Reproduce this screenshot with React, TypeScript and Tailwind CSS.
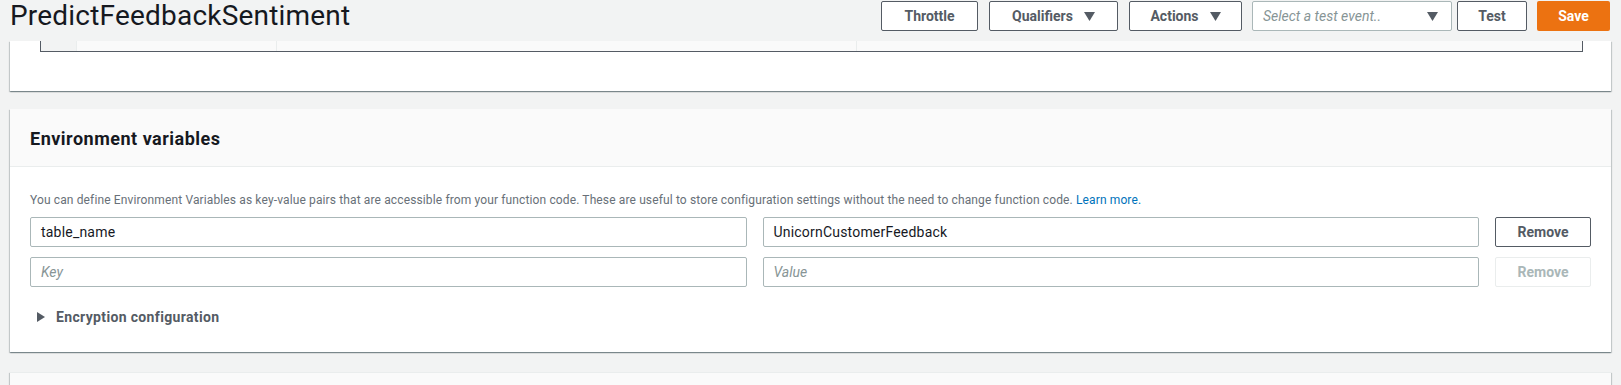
import React from "react";

const Tri = ({ className = "" }: { className?: string }) => (
  <svg width="11" height="9" viewBox="0 0 11 9" className={className}>
    <polygon points="0,0 11,0 5.5,9" fill="currentColor" />
  </svg>
);

const SmallTri = () => (
  <svg width="8" height="10" viewBox="0 0 8 10">
    <polygon points="0,0 8,5 0,10" fill="#545b64" />
  </svg>
);

const cardShadow =
  "shadow-[0_1px_1px_0_rgba(0,28,36,0.3),1px_1px_1px_0_rgba(0,28,36,0.15),-1px_1px_1px_0_rgba(0,28,36,0.15)]";

export default function App() {
  return (
    <div
      className="w-[1621px] h-[385px] overflow-hidden bg-[#f2f3f3] text-[#16191f]"
      style={{ fontFamily: "Roboto, 'Noto Sans', 'Liberation Sans', sans-serif" }}
    >
      {/* Header */}
      <div className="h-[41px] flex items-start justify-between pl-[10px] pr-[11px] pt-[1px]">
        <div className="text-[28px] leading-[30px] text-[#16191f] tracking-[0.2px]">PredictFeedbackSentiment</div>
        <div className="flex items-center">
          <button className="h-[30px] w-[97px] border border-[#545b64] rounded-[2px] bg-white text-[14px] font-bold text-[#545b64]">
            Throttle
          </button>
          <button className="ml-[11px] h-[30px] w-[129px] border border-[#545b64] rounded-[2px] bg-white text-[14px] font-bold text-[#545b64] flex items-center justify-center gap-[11px]">
            <span>Qualifiers</span>
            <Tri />
          </button>
          <button className="ml-[11px] h-[30px] w-[113px] border border-[#545b64] rounded-[2px] bg-white text-[14px] font-bold text-[#545b64] flex items-center justify-center gap-[11px]">
            <span>Actions</span>
            <Tri />
          </button>
          <div className="ml-[10px] h-[30px] w-[200px] border border-[#aab7b8] rounded-[2px] bg-white flex items-center justify-between pl-[10px] pr-[13px] text-[#545b64]">
            <span className="italic text-[14px] text-[#879596]">Select a test event..</span>
            <Tri />
          </div>
          <button className="ml-[5px] h-[30px] w-[70px] border border-[#545b64] rounded-[2px] bg-white text-[14px] font-bold text-[#545b64]">
            Test
          </button>
          <button className="ml-[10px] h-[30px] w-[73px] rounded-[2px] bg-[#ec7211] text-[14px] font-bold text-white">
            Save
          </button>
        </div>
      </div>

      {/* Previous card (scrolled) */}
      <div className={`mx-[10px] h-[50px] bg-white ${cardShadow} pl-[30px] pr-[28px]`}>
        <div className="h-[11px] bg-[#fafafa] border-x border-b border-[#545b64] flex">
          <div className="w-[36px] bg-[#f2f3f3] border-r border-[#eaeded]" />
          <div className="w-[200px] border-r border-[#eaeded]" />
          <div className="w-[580px] border-r border-[#eaeded]" />
          <div className="flex-1" />
        </div>
      </div>

      {/* Environment variables card */}
      <div className={`mx-[10px] mt-[18px] bg-white ${cardShadow}`}>
        <div className="h-[58px] bg-[#fafafa] border-b border-[#eaeded] px-[20px] flex items-center pt-[2px]">
          <h2 className="text-[18px] font-bold text-[#16191f] tracking-[0.5px]">Environment variables</h2>
        </div>
        <div className="px-[20px] pt-[25px] pb-[25px]">
          <p className="text-[12px] leading-[16px] text-[#687078] tracking-[0.13px]">
            You can define Environment Variables as key-value pairs that are accessible from your function code. These are useful to store configuration settings without the need to change function code.{" "}
            <span className="text-[#0073bb]">Learn more.</span>
          </p>
          <div className="mt-[9px] grid grid-cols-[1fr_1fr_96px] gap-x-[16px] gap-y-[10px]">
            <div className="h-[30px] border border-[#aab7b8] rounded-[2px] flex items-center px-[10px] text-[14px] text-[#16191f] tracking-[0.2px]">
              table_name
            </div>
            <div className="h-[30px] border border-[#aab7b8] rounded-[2px] flex items-center px-[10px] text-[14px] text-[#16191f] tracking-[0.2px]">
              UnicornCustomerFeedback
            </div>
            <button className="h-[30px] border border-[#545b64] rounded-[2px] bg-white text-[14px] font-bold text-[#545b64]">
              Remove
            </button>
            <div className="h-[30px] border border-[#aab7b8] rounded-[2px] flex items-center px-[10px] text-[14px] italic text-[#879596]">
              Key
            </div>
            <div className="h-[30px] border border-[#aab7b8] rounded-[2px] flex items-center px-[10px] text-[14px] italic text-[#879596]">
              Value
            </div>
            <button className="h-[30px] border border-[#eaeded] rounded-[2px] bg-white text-[14px] font-bold text-[#aab7b8]">
              Remove
            </button>
          </div>
          <div className="mt-[20px] h-[20px] flex items-center pl-[7px] gap-[11px]">
            <SmallTri />
            <span className="text-[14px] font-bold text-[#545b64] tracking-[0.35px]">Encryption configuration</span>
          </div>
        </div>
      </div>

      {/* Next card */}
      <div className={`mx-[10px] mt-[20px] h-[60px] bg-[#fafafa] border-t border-[#eaeded] ${cardShadow}`} />
    </div>
  );
}
